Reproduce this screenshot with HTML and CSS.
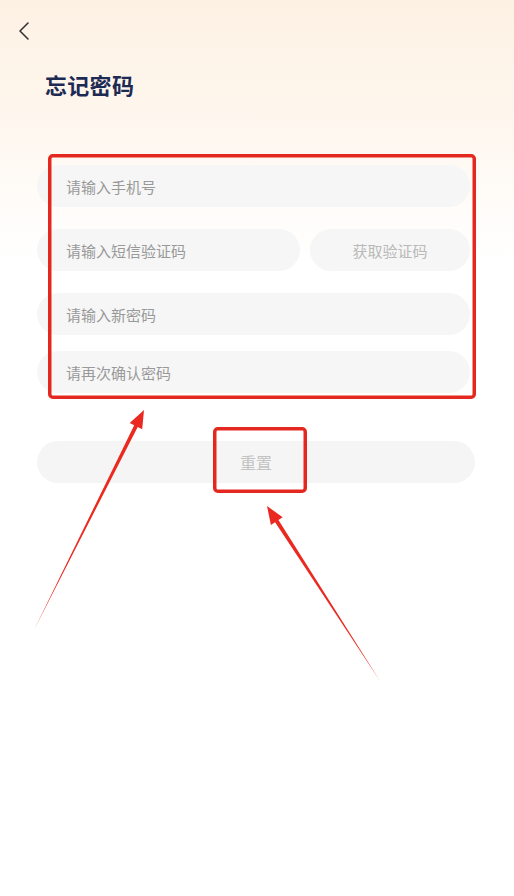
FILE: index.html
```html
<!DOCTYPE html>
<html lang="zh-CN">
<head>
<meta charset="utf-8">
<title>忘记密码</title>
<link rel="stylesheet" href="styles.css">
</head>
<body>
<div class="page">
  <header class="topbar">
    <svg class="back" width="12" height="20" viewBox="0 0 12 20" aria-hidden="true">
      <path d="M10 2 L2 10 L10 18" fill="none" stroke="#333" stroke-width="1.6" stroke-linecap="round" stroke-linejoin="round"/>
    </svg>
  </header>
  <h1 class="title">忘记密码</h1>
  <div class="form">
    <div class="field"><span class="ph">请输入手机号</span></div>
    <div class="row">
      <div class="field code"><span class="ph">请输入短信验证码</span></div>
      <div class="getcode">获取验证码</div>
    </div>
    <div class="field"><span class="ph">请输入新密码</span></div>
    <div class="field tight"><span class="ph">请再次确认密码</span></div>
    <div class="reset">重置</div>
  </div>
  <svg class="marks" width="514" height="896" viewBox="0 0 514 896" aria-hidden="true">
    <rect x="49.75" y="155.75" width="424.5" height="241.5" rx="3" fill="none" stroke="#e5281f" stroke-width="3.5"/>
    <rect x="214.75" y="428.75" width="90.5" height="62.5" rx="3" fill="none" stroke="#e5281f" stroke-width="3.5"/>
    <polygon fill="#ea2a20" points="35,628 134.2,425.2 129.7,423.0 144,410 142.2,429.2 137.7,427.0"/>
    <polygon fill="#ea2a20" points="380,681 275.1,522.2 270.9,524.9 267,506 282.65,517.3 278.45,520.0"/>
  </svg>
</div>
</body>
</html>
```
FILE: styles.css
```css
* { box-sizing: border-box; }
html, body { margin: 0; padding: 0; }
body {
  font-family: "Noto Sans CJK SC", "Noto Sans", sans-serif;
  background: #fff;
}
.page {
  position: relative;
  width: 514px;
  height: 896px;
  overflow: hidden;
  background: linear-gradient(180deg, #fdf1e3 0px, #fef6ed 110px, #fffbf7 190px, #ffffff 260px);
}
.topbar {
  height: 44px;
  padding: 21px 0 0 18px;
}
.back { display: block; }
.title {
  margin: 25px 0 0 45px;
  font-size: 22px;
  line-height: 30px;
  font-weight: 700;
  color: #1c2a54;
  letter-spacing: 0.3px;
}
.form {
  margin-top: 66px;
  padding: 0 44px 0 37px;
  display: flex;
  flex-direction: column;
}
.field {
  height: 42px;
  border-radius: 21px;
  background: #f6f6f6;
  display: flex;
  align-items: center;
  padding-left: 29px;
  margin-bottom: 22px;
}
.field.tight { margin-top: -6px; }
.ph {
  font-size: 15px;
  color: #999999;
}
.row {
  display: flex;
  gap: 10px;
  margin-bottom: 22px;
}
.row .field { margin-bottom: 0; }
.field.code { width: 263px; }
.getcode {
  flex: 1;
  height: 42px;
  border-radius: 21px;
  background: #f6f6f6;
  display: flex;
  align-items: center;
  justify-content: center;
  font-size: 15px;
  color: #b9b9b9;
}
.reset {
  margin-top: 26px;
  width: calc(100% + 5px);
  height: 42px;
  border-radius: 21px;
  background: #f5f5f6;
  display: flex;
  align-items: center;
  justify-content: center;
  font-size: 16px;
  color: #c3c3c3;
}
.marks {
  position: absolute;
  left: 0;
  top: 0;
  pointer-events: none;
}
```
